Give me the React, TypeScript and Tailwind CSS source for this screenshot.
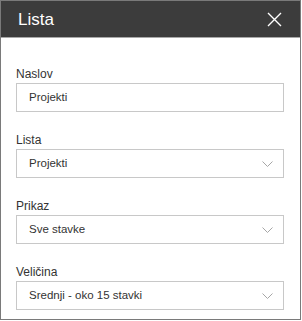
const fields = [
    { label: 'Naslov', value: 'Projekti', select: false },
    { label: 'Lista', value: 'Projekti', select: true },
    { label: 'Prikaz', value: 'Sve stavke', select: true },
    { label: 'Veličina', value: 'Srednji - oko 15 stavki', select: true },
];

function Chevron() {
    return (
        <svg width="11" height="6" viewBox="0 0 11 6" className="shrink-0">
            <path d="M0.5 0.5 L5.5 5.5 L10.5 0.5" fill="none" stroke="#a6a6a6" strokeWidth="1" />
        </svg>
    );
}

export default function App() {
    return (
        <div className="w-[301px] h-[320px] border border-[#7a7a7a] bg-white flex flex-col" style={{ fontFamily: '"Liberation Sans", Arial, sans-serif' }}>
            {/* header */}
            <div className="h-[36px] bg-[#3c3c3c] flex items-center justify-between pl-[17px] pr-[18px]">
                <span className="text-[17px] text-white leading-none">Lista</span>
                <svg width="15" height="15" viewBox="0 0 15 15">
                    <path d="M1 1 L14 14 M14 1 L1 14" stroke="#ffffff" strokeWidth="1.4" />
                </svg>
            </div>
            <div className="h-px bg-[#a8a8a8]" />

            <div className="flex flex-col gap-[19px] pt-[27px] pl-[15px] pr-[16px]">
                {fields.map((f) => (
                    <div key={f.label} className="flex flex-col">
                        <label className="h-[18px] leading-[18px] text-[12px] text-[#333333]">{f.label}</label>
                        <div className="h-[29px] border border-[#c8c8c8] flex items-center justify-between pl-[12px] pr-[10px]">
                            <span className="text-[11.5px] text-[#333333]">{f.value}</span>
                            {f.select && <Chevron />}
                        </div>
                    </div>
                ))}
            </div>
        </div>
    );
}
